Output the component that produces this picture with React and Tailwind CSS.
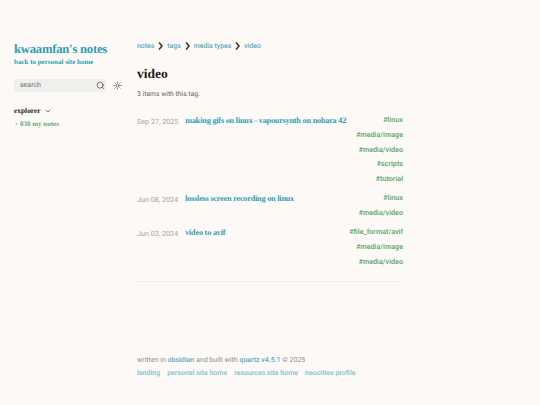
import { Search, Sun, ChevronDown, ChevronRight } from 'lucide-react';

const sans = "font-['Roboto',sans-serif]";
const serif = "font-['Liberation_Serif',serif]";

const crumbs = ['notes', 'tags', 'media types', 'video'];

const items = [
  {
    date: 'Sep 27, 2025',
    title: 'making gifs on linux - vapoursynth on nobara 42',
    tags: ['#linux', '#media/image', '#media/video', '#scripts', '#tutorial'],
  },
  {
    date: 'Jun 08, 2024',
    title: 'lossless screen recording on linux',
    tags: ['#linux', '#media/video'],
  },
  {
    date: 'Jun 03, 2024',
    title: 'video to avif',
    tags: ['#file_format/avif', '#media/image', '#media/video'],
  },
];

const Crumb = ({ label, last }) => (
  <>
    <span className="text-[#5aa9bd] font-medium">{label}</span>
    {!last && (
      <svg className="w-[5px] h-[8px] mx-[4px]" viewBox="0 0 5 8" fill="none" stroke="#333" strokeWidth="1.5">
        <path d="M1 0.5 L4 4 L1 7.5" />
      </svg>
    )}
  </>
);

const Row = ({ item }) => (
  <div className="flex items-start">
    <div className="mr-[7px] text-[7.2px] leading-[15px] mt-[1px] text-[#a5a5a3] whitespace-nowrap">{item.date}</div>
    <div className={`flex-1 min-w-0 text-[8.2px] tracking-[-0.2px] leading-[15px] font-bold text-[#2f9cb4] whitespace-nowrap ${serif}`}>{item.title}</div>
    <div className="flex flex-col items-end">
      {item.tags.map(t => (
        <div key={t} className="text-[7.2px] leading-[14.8px] font-semibold text-[#64ab78] whitespace-nowrap">{t}</div>
      ))}
    </div>
  </div>
);

export default function App() {
  return (
    <div className={`flex w-[540px] h-[405px] overflow-hidden bg-[#fcf9f6] [text-rendering:geometricPrecision] ${sans}`}>
      {/* left column */}
      <div className="w-[137px] shrink-0 pl-[14px] pt-[42px]">
        <h1 className={`text-[12.6px] tracking-[-0.2px] leading-[15px] font-bold text-[#2f9cb4] whitespace-nowrap ${serif}`}>kwaamfan's notes</h1>
        <div className={`text-[7px] leading-[10px] font-bold text-[#2f9cb4] whitespace-nowrap ${serif}`}>back to personal site home</div>
        <div className="flex items-center mt-[12px]">
          <div className="w-[92px] h-[13px] rounded-[2px] bg-[#efefed] flex items-center justify-between pl-[6px] pr-[1px]">
            <span className="text-[7px] text-[#6f6f6d]">search</span>
            <Search className="w-[9px] h-[9px] text-[#444]" strokeWidth={1.8} />
          </div>
          <Sun className="w-[9px] h-[9px] ml-[7px] text-[#444]" strokeWidth={1.8} />
        </div>
        <div className="flex items-center mt-[14px]">
          <span className={`text-[7.4px] leading-[10px] font-bold text-[#1c1c1c] ${serif}`}>explorer</span>
          <ChevronDown className="w-[8px] h-[8px] ml-[3px] text-[#333]" strokeWidth={2} />
        </div>
        <div className="flex items-center mt-[3px]">
          <ChevronRight className="w-[5px] h-[6px] mr-[1px] text-[#3f8f60]" strokeWidth={2.5} />
          <span className={`text-[7px] leading-[10px] font-bold text-[#64ab78] ${serif}`}>030 my notes</span>
        </div>
      </div>

      {/* main column */}
      <div className="w-[266px] shrink-0 flex flex-col pt-[40px]">
        <div className="flex items-center text-[6.9px] leading-[12px]">
          {crumbs.map((c, i) => <Crumb key={c} label={c} last={i === crumbs.length - 1} />)}
        </div>
        <h2 className={`text-[13.5px] leading-[16px] font-bold text-[#1c1c1c] mt-[14px] ${serif}`}>video</h2>
        <p className="text-[6.8px] leading-[10px] text-[#5f5f5d] mt-[7px]">3 items with this tag.</p>
        <div className="flex flex-col gap-[4.4px] mt-[14px]">
          {items.map(it => <Row key={it.date} item={it} />)}
        </div>
        <div className="border-t border-[#f0eeec] mt-[11px]" />
        <div className="text-[7px] leading-[12px] text-[#8d8d8b] mt-[72px] whitespace-nowrap">
          written in <span className="text-[#5aa9bd] font-medium">obsidian</span> and built with <span className="text-[#5aa9bd] font-medium">quartz v4.5.1</span> © 2025
        </div>
        <div className="flex gap-[7px] text-[7px] leading-[12px] mt-[1px] font-semibold text-[#8cc3d1] whitespace-nowrap">
          <span>landing</span><span>personal site home</span><span>resources site home</span><span>neocities profile</span>
        </div>
      </div>
    </div>
  );
}
